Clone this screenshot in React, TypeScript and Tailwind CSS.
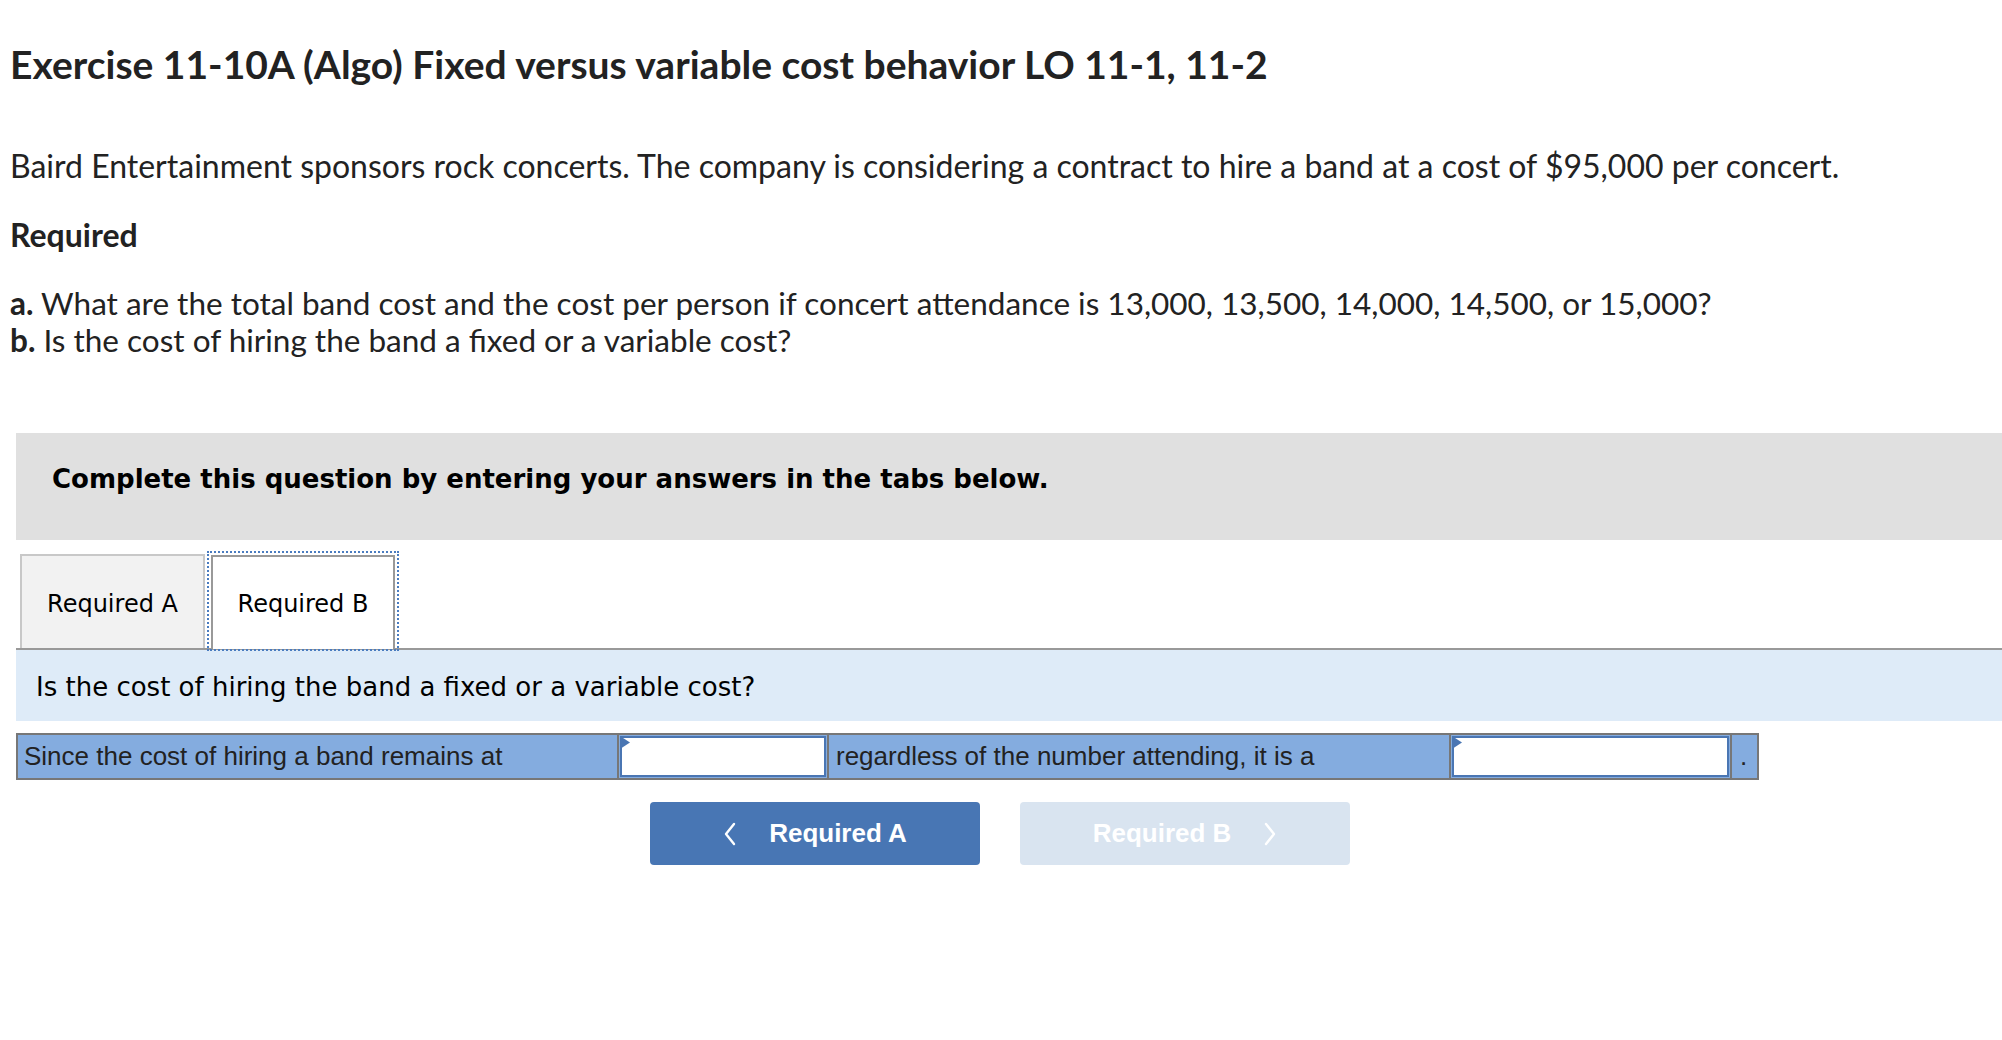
import React from 'react';

function AnswerBox({ width }: { width: string }) {
  return (
    <div className={`${width} relative h-full shrink-0 border-r-2 border-[#777] bg-[#84acdf] p-px`}>
      <div className="relative h-full w-full border-2 border-[#4a76b3] bg-white">
        <svg className="absolute -left-[2px] -top-[2px]" width="10" height="13" viewBox="0 0 10 13">
          <polygon points="0,0 10,6.5 0,13" fill="#4a76b3" />
        </svg>
      </div>
    </div>
  );
}

function Chevron({ dir, color }: { dir: 'left' | 'right'; color: string }) {
  return (
    <svg width="14" height="24" viewBox="0 0 14 24" fill="none">
      <polyline
        points={dir === 'left' ? '11,2 3,12 11,22' : '3,2 11,12 3,22'}
        stroke={color}
        strokeWidth="2.4"
        strokeLinecap="round"
        strokeLinejoin="round"
      />
    </svg>
  );
}

export default function App() {
  return (
    <div className="min-h-screen w-full overflow-hidden bg-white">
      {/* question statement */}
      <div className="pl-[10px] pt-[40px] font-['Lato',sans-serif] text-[#222]">
        <h1 className="text-[39px] leading-[48px] font-bold">
          Exercise 11-10A (Algo) Fixed versus variable cost behavior LO 11-1, 11-2
        </h1>
        <p className="mt-[58px] text-[32px] leading-[40px]">
          Baird Entertainment sponsors rock concerts. The company is considering a contract to hire a band at a cost of
          $95,000 per concert.
        </p>
        <p className="mt-[31px] text-[32px] leading-[36px] font-bold">Required</p>
        <div className="mt-[32px] text-[31.5px] leading-[37px]">
          <p>
            <span className="font-bold">a.</span> What are the total band cost and the cost per person if concert
            attendance is 13,000, 13,500, 14,000, 14,500, or 15,000?
          </p>
          <p>
            <span className="font-bold">b.</span> Is the cost of hiring the band a fixed or a variable cost?
          </p>
        </div>
      </div>

      {/* instructions band */}
      <div className="ml-[16px] mt-[74px] flex h-[107px] items-center bg-[#e0e0e0] pb-[14px] pl-[36px] font-['DejaVu_Sans',sans-serif] text-[26px] font-bold text-black">
        Complete this question by entering your answers in the tabs below.
      </div>

      {/* tabs */}
      <div className="ml-[16px] mt-[11px] flex h-[99px] items-end border-b-2 border-[#999] font-['DejaVu_Sans',sans-serif] text-[24px] text-black">
        <div className="ml-[4px] flex h-[94px] w-[185px] items-center justify-center border-2 border-b-0 border-[#c8c8c8] bg-[#f2f2f2] pt-[4px]">
          Required A
        </div>
        <div className="relative z-10 -mb-[3px] ml-[2px] h-[100px] w-[192px] border-2 border-dotted border-[#4a7cc0] px-[2px] pt-[2px]">
          <div className="flex h-full w-full items-center justify-center border-2 border-b-0 border-[#999] bg-white pt-[2px]">
            Required B
          </div>
        </div>
      </div>

      <div className="ml-[16px] flex h-[71px] items-center bg-[#deebf8] pl-[20px] pt-[4px] font-['DejaVu_Sans',sans-serif] text-[26px] text-black">
        Is the cost of hiring the band a fixed or a variable cost?
      </div>

      {/* answer row */}
      <div className="ml-[16px] mt-[12px] flex h-[47px] w-[1743px] border-2 border-[#777] bg-[#84acdf] font-['Liberation_Sans',Arial,sans-serif] text-[26px] text-[#222]">
        <div className="flex h-full w-[601px] shrink-0 items-center border-r-2 border-[#777] pl-[6px]">
          Since the cost of hiring a band remains at
        </div>
        <AnswerBox width="w-[210px]" />
        <div className="flex h-full w-[622px] shrink-0 items-center border-r-2 border-[#777] pl-[7px]">
          regardless of the number attending, it is a
        </div>
        <AnswerBox width="w-[281px]" />
        <div className="flex h-full flex-1 items-center pl-[8px]">.</div>
      </div>

      {/* navigation */}
      <div className="ml-[650px] mt-[22px] flex gap-[40px] font-['Liberation_Sans',Arial,sans-serif] text-[26px] font-bold text-white">
        <button className="flex h-[63px] w-[330px] items-center justify-center gap-[32px] rounded-[4px] bg-[#4876b4]">
          <Chevron dir="left" color="#ffffff" />
          <span>Required A</span>
        </button>
        <button className="flex h-[63px] w-[330px] items-center justify-center gap-[32px] rounded-[4px] bg-[#d9e4f0]">
          <span>Required B</span>
          <Chevron dir="right" color="#ffffff" />
        </button>
      </div>
    </div>
  );
}
